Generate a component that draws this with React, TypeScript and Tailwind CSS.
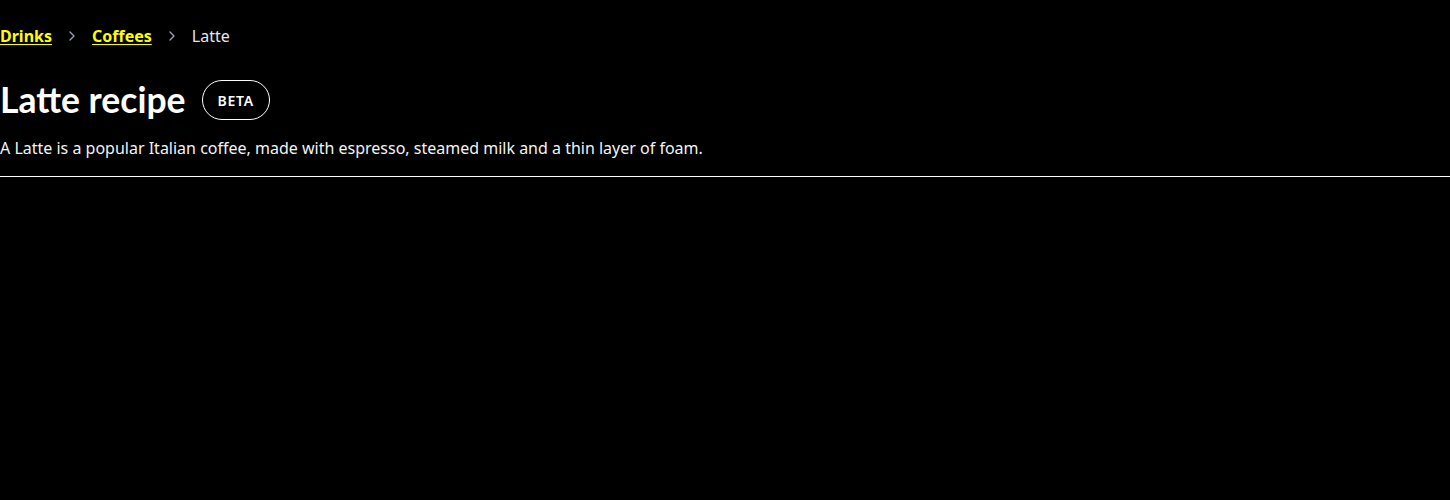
import { ChevronRight } from "lucide-react";

const crumbs = [
  { label: "Drinks", href: "#" },
  { label: "Coffees", href: "#" },
];

export default function App() {
  return (
    <div className="min-h-[500px] bg-black text-white font-['Noto_Sans',sans-serif]">
      <nav className="flex items-center pt-[25px] text-base leading-[22px]">
        {crumbs.map((c) => (
          <span key={c.label} className="flex items-center">
            <a href={c.href} className="font-bold text-[#ffff00] underline underline-offset-2">
              {c.label}
            </a>
            <ChevronRight className="mx-[12px] h-4 w-4 text-gray-400" strokeWidth={2} />
          </span>
        ))}
        <span className="text-gray-200">Latte</span>
      </nav>

      <div className="mt-[33px] flex items-center gap-4">
        <h1 className="font-['Lato',sans-serif] text-[35.5px] font-bold leading-10">Latte recipe</h1>
        <span className="flex h-10 items-center rounded-full border border-white px-[15px] text-[14px] font-semibold tracking-wider">
          BETA
        </span>
      </div>

      <p className="mt-[17px] text-base leading-[22px] text-gray-100">
        A Latte is a popular Italian coffee, made with espresso, steamed milk and a thin layer of foam.
      </p>
      <hr className="mt-[17px] border-white" />
    </div>
  );
}
